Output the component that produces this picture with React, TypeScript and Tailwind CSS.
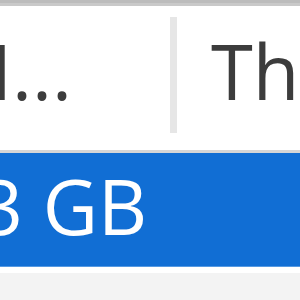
const font = { fontFamily: '"Open Sans", "Noto Sans", sans-serif' };

export default function App() {
  return (
    <div className="w-[300px] h-[300px] overflow-hidden bg-white flex flex-col" style={font}>
      {/* window edge */}
      <div className="h-[3px] bg-[#bcbcbc]" />
      <div className="h-[3px] bg-[#c9c9c9]" />

      {/* column headers */}
      <div className="h-[144px] flex bg-white">
        <div className="w-[170px] shrink-0 flex justify-end pr-[98px] pt-[27px] overflow-hidden">
          <span className="text-[76px] leading-none text-[#3c3c3c] whitespace-nowrap">M...</span>
        </div>
        <div className="w-[7px] shrink-0 flex flex-col pt-[11px] pb-[17px]">
          <div className="flex-1 bg-[#e6e6e6]" />
        </div>
        <div className="flex-1 pl-[34px] pt-[27px] overflow-hidden">
          <span className="text-[76px] leading-none text-[#3c3c3c] whitespace-nowrap">Th</span>
        </div>
      </div>
      <div className="h-[3px] bg-[#d6d6d6]" />

      {/* selected row */}
      <div className="h-[113px] bg-[#116ed4] flex">
        <div className="w-[170px] shrink-0 flex justify-end pr-[23px] pt-[15px] overflow-hidden">
          <span className="text-[76px] leading-none text-white whitespace-nowrap">3 GB</span>
        </div>
      </div>
      <div className="h-[1px] bg-[#5599e2]" />
      <div className="h-[6px] bg-white" />
      <div className="flex-1 bg-[#f3f3f3]" />
    </div>
  );
}
